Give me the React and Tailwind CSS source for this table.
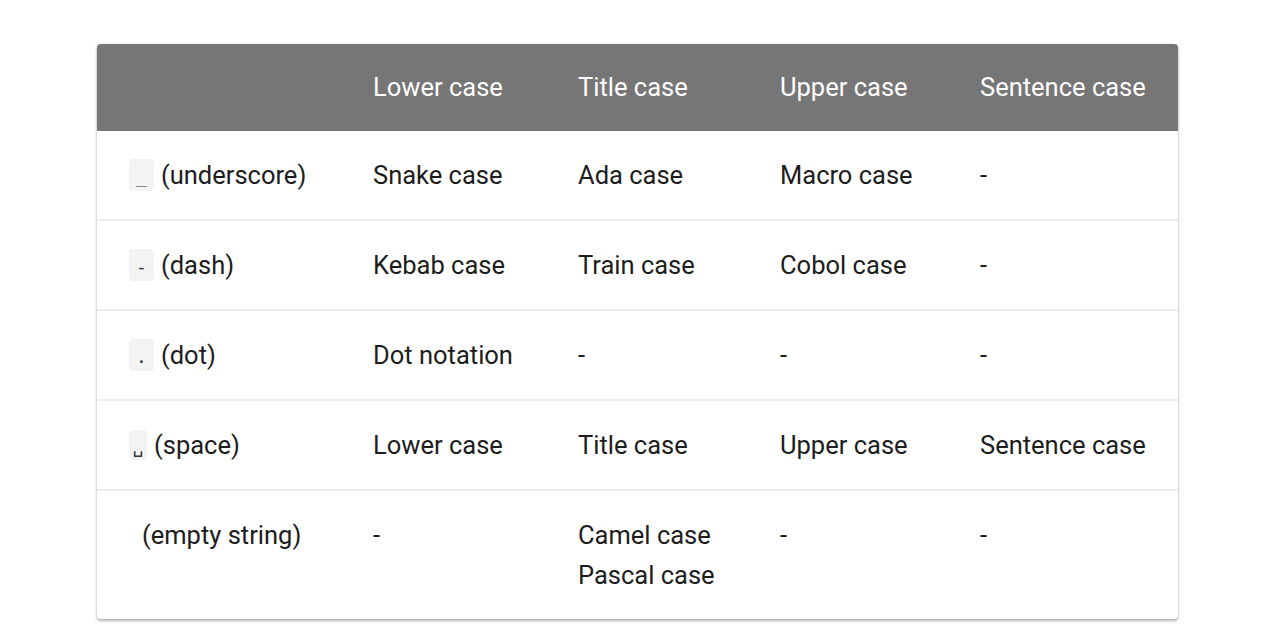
import React from 'react';

const rows = [
  { code: '_', codeW: 'w-[25px] h-[32px]', label: '(underscore)', cells: ['Snake case', 'Ada case', 'Macro case', '-'] },
  { code: '-', codeW: 'w-[25px] h-[32px]', label: '(dash)', cells: ['Kebab case', 'Train case', 'Cobol case', '-'] },
  { code: '.', codeW: 'w-[25px] h-[32px]', label: '(dot)', cells: ['Dot notation', '-', '-', '-'] },
  { code: '␣', codeW: 'w-[18px] h-[30px]', label: '(space)', cells: ['Lower case', 'Title case', 'Upper case', 'Sentence case'] },
  { code: '', codeW: 'w-[6px] h-[30px] bg-transparent', label: '(empty string)', cells: ['-', ['Camel case', 'Pascal case'], '-', '-'] },
];

const headers = ['Lower case', 'Title case', 'Upper case', 'Sentence case'];
const colW = ['w-[205px]', 'w-[202px]', 'w-[200px]', 'w-[230px]'];

function Code({ value, size }) {
  return (
    <span
      className={`${size} inline-flex items-center justify-center rounded-[4px] bg-[#f3f3f3] text-[18px] leading-none text-[#333] pt-[4px]`}
      style={{ fontFamily: '"DejaVu Sans Mono", "Liberation Mono", monospace' }}
    >
      {value}
    </span>
  );
}

export default function App() {
  return (
    <div className="min-h-[629px] bg-white pt-[44px] pl-[97px]" style={{ fontFamily: 'Roboto, "Noto Sans", sans-serif' }}>
      <div className="w-[1081px] rounded-[4px] overflow-hidden bg-white shadow-[0_2px_3px_rgba(0,0,0,0.3),0_0_2px_rgba(0,0,0,0.12)]">
        <div className="flex bg-[#767676] text-white text-[25.5px] leading-[40px] h-[87px] pb-[2px] items-center">
          <div className="w-[244px]" />
          {headers.map((h, i) => (
            <div key={h} className={`${colW[i]} pl-[32px]`}>{h}</div>
          ))}
        </div>
        {rows.map((r, idx) => (
          <div
            key={r.label}
            className={`flex text-[25.5px] leading-[40px] text-[#1d1d1d] py-[24px] ${idx < rows.length - 1 ? 'border-b-2 border-[#ededed]' : ''}`}
          >
            <div className="w-[244px] pl-[32px] flex items-center gap-[7px] h-[40px]">
              <Code value={r.code} size={r.codeW} />
              <span>{r.label}</span>
            </div>
            {r.cells.map((c, i) => (
              <div key={i} className={`${colW[i]} pl-[32px]`}>
                {Array.isArray(c) ? c.map((l) => <div key={l}>{l}</div>) : c}
              </div>
            ))}
          </div>
        ))}
      </div>
    </div>
  );
}
